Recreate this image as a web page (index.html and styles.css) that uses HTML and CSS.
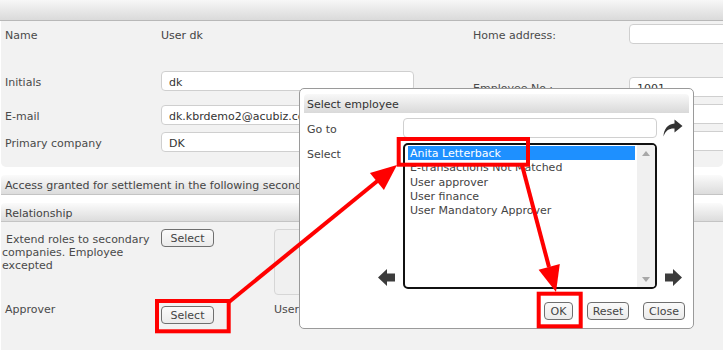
FILE: index.html
```html
<!DOCTYPE html>
<html lang="en">
<head>
  <meta charset="UTF-8" />
  <meta name="viewport" content="width=device-width, initial-scale=1" />
  <title>Employee</title>
  <link rel="stylesheet" href="styles.css">
</head>
<body>
  <div class="topbar"></div>

  <!-- Employee details -->
  <div class="panel main-panel">
    <div class="col col-left">
      <div class="row r1">
        <span class="label">Name</span>
        <span class="value">User dk</span>
      </div>
      <div class="row r2">
        <span class="label">Initials</span>
        <input class="field" type="text" value="dk" readonly />
      </div>
      <div class="row r3">
        <span class="label">E-mail</span>
        <input class="field" type="text" value="dk.kbrdemo2@acubiz.com" readonly />
      </div>
      <div class="row r4">
        <span class="label">Primary company</span>
        <input class="field" type="text" value="DK" readonly />
      </div>
    </div>
    <div class="col col-right">
      <div class="row r1">
        <span class="label">Home address:</span>
        <input class="field wide" type="text" value="" readonly />
      </div>
      <div class="row rr2">
        <span class="label">Employee No.:</span>
        <input class="field wide" type="text" value="1001" readonly />
      </div>
      <div class="row rr3">
        <span class="label"></span>
        <input class="field wide" type="text" value="" readonly />
      </div>
      <div class="row rr3">
        <span class="label"></span>
        <input class="field wide" type="text" value="" readonly />
      </div>
    </div>
  </div>

  <div class="bar bar-access">Access granted for settlement in the following secondary companies</div>
  <div class="bar bar-rel">Relationship</div>

  <div class="panel rel-panel">
    <div class="rel-row rel-extend">
      <div class="rel-label">Extend roles to secondary companies. Employee excepted</div>
      <button class="btn btn-select" type="button">Select</button>
      <div class="role-box"></div>
    </div>
    <div class="rel-row rel-approver">
      <div class="rel-label">Approver</div>
      <button class="btn btn-select" type="button">Select</button>
      <div class="rel-value">User approver</div>
    </div>
  </div>

  <!-- Select employee dialog -->
  <div class="dialog" role="dialog" aria-label="Select employee">
    <div class="dlg-head">Select employee</div>
    <div class="dlg-body">
      <div class="goto-row">
        <span class="dlg-label">Go to</span>
        <input class="goto-input" type="text" value="" />
        <svg class="redo" viewBox="0 0 20 18" aria-hidden="true">
          <path d="M11.5 0.5 L19.5 7 L11.5 13.5 V9.6 C6 9.4 2.6 11.6 0.5 17.5 C0.8 10.5 4.5 5.3 11.5 4.6 Z" />
        </svg>
      </div>
      <div class="select-row">
        <div class="select-side">
          <span class="dlg-label select-label">Select</span>
          <svg class="move-arrow" viewBox="0 0 17 17" aria-hidden="true">
            <path d="M17 4.5 H9 V0 L0 8.5 L9 17 V12.5 H17 Z" />
          </svg>
        </div>
        <div class="listbox">
          <div class="list-items">
            <div class="item selected">Anita Letterback</div>
            <div class="item">E-transactions Not Matched</div>
            <div class="item">User approver</div>
            <div class="item">User finance</div>
            <div class="item">User Mandatory Approver</div>
          </div>
          <div class="scrollbar">
            <span class="tri tri-up"></span>
            <span class="tri tri-down"></span>
          </div>
        </div>
        <svg class="move-arrow right" viewBox="0 0 17 17" aria-hidden="true">
          <path d="M0 4.5 H8 V0 L17 8.5 L8 17 V12.5 H0 Z" />
        </svg>
      </div>
      <div class="dlg-buttons">
        <button class="btn btn-ok" type="button">OK</button>
        <button class="btn btn-reset" type="button">Reset</button>
        <button class="btn btn-close" type="button">Close</button>
      </div>
    </div>
  </div>

  <!-- Red callouts drawn over the screenshot -->
  <svg class="annotations" viewBox="0 0 723 350" aria-hidden="true">
    <rect x="398.7" y="139" width="129.3" height="25.7" />
    <rect x="538.7" y="293.7" width="42" height="32.6" />
    <rect x="157" y="301" width="71.7" height="30.3" />
    <line x1="229" y1="302" x2="378" y2="180.5" />
    <polygon class="head" points="397,165 383.9,190 369.9,173" />
    <line x1="522" y1="165" x2="549" y2="267" />
    <polygon class="head" points="556,292 559.8,264 538.6,269.8" />
  </svg>
</body>
</html>
```

FILE: styles.css
```css
* {
  box-sizing: border-box;
}
body {
  margin: 0;
  width: 723px;
  height: 350px;
  overflow: hidden;
  position: relative;
  background: #fff;
  font-family: "DejaVu Sans", Verdana, sans-serif;
  font-size: 11px;
  color: #4a4a4a;
}
.topbar {
  height: 21px;
  background: linear-gradient(#f7f7f7, #dadada);
  border-bottom: 1px solid #b8b8b8;
}
.panel {
  background: #f2f2f2;
  margin-left: 1px;
}
.main-panel {
  display: flex;
  height: 146px;
  border-radius: 0 0 5px 5px;
  overflow: hidden;
}
.col-left {
  width: 472px;
  flex: none;
  padding-left: 4px;
}
.col-right {
  flex: none;
}
.row {
  display: flex;
  align-items: center;
  height: 20px;
}
.r1 { margin-top: 3px; }
.r2 { margin-top: 27px; }
.r3 { margin-top: 14px; }
.r4 { margin-top: 7px; }
.rr2 { margin-top: 33px; }
.rr3 { margin-top: 7px; }
.label {
  width: 156px;
  flex: none;
  padding-top: 2px;
}
.value {
  color: #444;
  padding-top: 2px;
}
.field {
  width: 253px;
  height: 20px;
  flex: none;
  border: 1px solid #cfcfcf;
  border-radius: 4px;
  background: #fff;
  padding: 2px 7px 0;
  font: inherit;
  color: #333;
  outline: none;
}
.field.wide {
  width: 130px;
}

.bar {
  margin-left: 1px;
  padding: 2px 0 0 4px;
  background: linear-gradient(#fbfbfb, #dcdcdc);
  border-bottom: 1px solid #c4c4c4;
  border-radius: 4px 4px 0 0;
  white-space: nowrap;
  overflow: hidden;
  color: #444;
}
.bar-access {
  margin-top: 8px;
  height: 20px;
  line-height: 17px;
}
.bar-rel {
  margin-top: 8px;
  height: 19px;
  padding-top: 3px;
  line-height: 16px;
}
.rel-panel {
  height: 130px;
}
.rel-row {
  display: flex;
  align-items: flex-start;
}
.rel-extend {
  padding-top: 7px;
}
.rel-approver {
  margin-top: 7px;
}
.rel-label {
  width: 160px;
  flex: none;
  padding: 0 6px 0 1px;
  margin-top: 4px;
  line-height: 13px;
  text-indent: 4px;
}
.rel-approver .rel-label {
  padding-left: 4px;
  text-indent: 0;
  margin-top: 1px;
}
.btn {
  height: 18px;
  padding: 0;
  border: 1px solid #6f6f6f;
  border-radius: 4px;
  background: linear-gradient(#fafafa, #ebebeb);
  font: inherit;
  color: #444;
  line-height: 15px;
}
.btn-select {
  width: 53px;
  flex: none;
}
.rel-approver .btn-select {
  margin-top: 4px;
}
.role-box {
  margin-left: 60px;
  width: 200px;
  height: 66px;
  border: 1px solid #d6d6d6;
  border-radius: 4px;
  background: #f0f0f0;
}
.rel-value {
  margin-left: 60px;
  margin-top: 1px;
  line-height: 13px;
}

/* dialog */
.dialog {
  position: absolute;
  left: 299px;
  top: 88px;
  width: 395px;
  height: 241px;
  background: #fff;
  border: 1px solid #9a9a9a;
  border-radius: 5px;
  padding: 5px 4px 0 4px;
}
.dlg-head {
  height: 19px;
  line-height: 17px;
  padding: 2px 0 0 3px;
  background: linear-gradient(#f8f8f8, #d9d9d9);
  border-radius: 4px 4px 0 0;
  color: #333;
}
.dlg-body {
  padding-left: 3px;
}
.goto-row {
  display: flex;
  align-items: center;
  height: 20px;
  margin-top: 5px;
}
.dlg-label {
  width: 96px;
  flex: none;
  color: #444;
  padding-top: 2px;
}
.goto-input {
  width: 254px;
  height: 20px;
  border: 1px solid #d0d0d0;
  border-radius: 4px;
  background: #fff;
  outline: none;
}
.redo {
  width: 20px;
  height: 18px;
  margin-left: 6px;
  fill: #333;
}
.select-row {
  display: flex;
  margin-top: 5px;
}
.select-side {
  width: 96px;
  flex: none;
  display: flex;
  flex-direction: column;
  justify-content: space-between;
}
.select-label {
  margin-top: 3px;
  line-height: 14px;
}
.move-arrow {
  width: 17px;
  height: 17px;
  fill: #3c3c3c;
  align-self: flex-end;
  margin: 0 8px 3px 0;
}
.move-arrow.right {
  margin: 0 0 3px 8px;
}
.listbox {
  width: 254px;
  height: 146px;
  flex: none;
  display: flex;
  border: 2px solid #111;
  border-radius: 5px;
  overflow: hidden;
}
.list-items {
  flex: 1;
  padding: 1px 2px 0 3px;
}
.item {
  height: 14.3px;
  line-height: 14.3px;
  padding: 1px 0 0 2px;
  white-space: nowrap;
  color: #444;
}
.item.selected {
  background: #1e90ff;
  color: #fff;
}
.scrollbar {
  width: 18px;
  background: #f0f0f0;
  display: flex;
  flex-direction: column;
  justify-content: space-between;
  align-items: center;
  padding: 6px 0 5px;
}
.tri {
  width: 0;
  height: 0;
  border-left: 4px solid transparent;
  border-right: 4px solid transparent;
}
.tri-up {
  border-bottom: 5px solid #a8a8a8;
}
.tri-down {
  border-top: 5px solid #a8a8a8;
}
.dlg-buttons {
  display: flex;
  justify-content: flex-end;
  gap: 14px;
  margin: 13px 4px 0 0;
}
.btn-ok { width: 29px; }
.btn-reset { width: 42px; }
.btn-close { width: 42px; }

/* red callouts */
.annotations {
  position: absolute;
  left: 0;
  top: 0;
  width: 723px;
  height: 350px;
  pointer-events: none;
}
.annotations rect,
.annotations line {
  fill: none;
  stroke: #ff0000;
  stroke-width: 4;
}
.annotations .head {
  fill: #ff0000;
}
```
